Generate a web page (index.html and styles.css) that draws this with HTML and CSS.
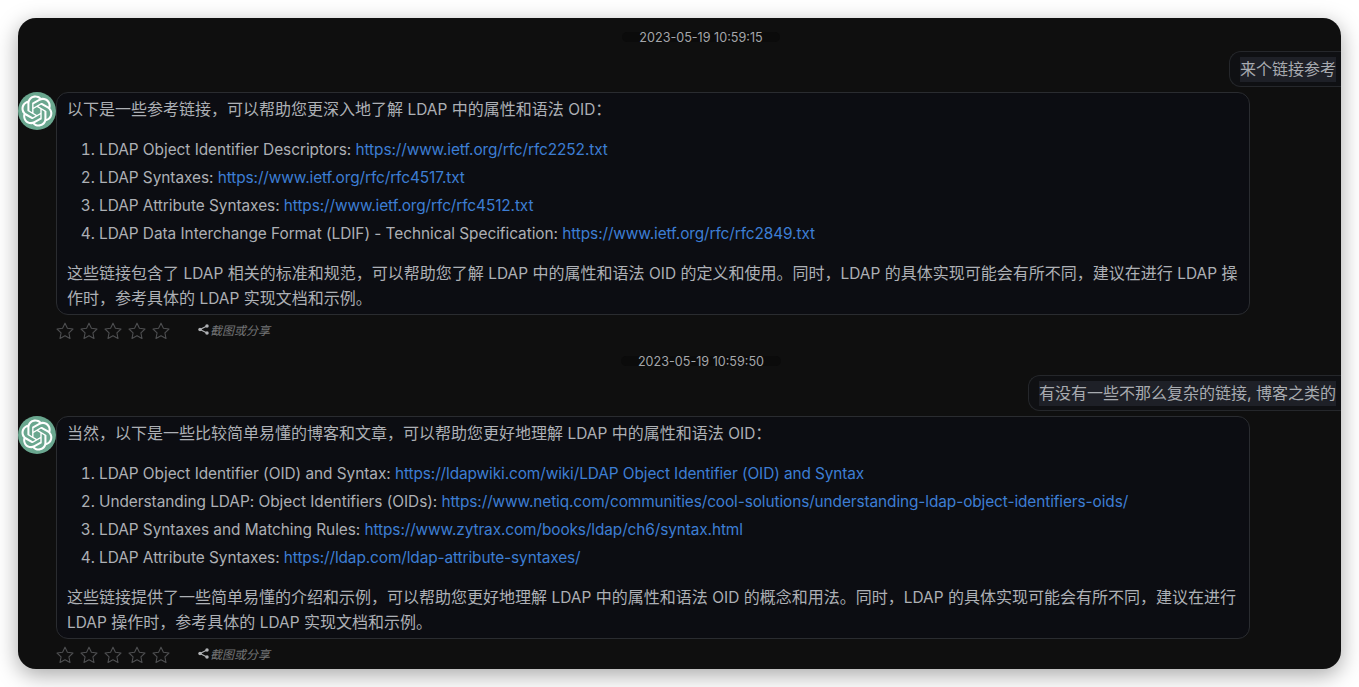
FILE: index.html
```html
<!DOCTYPE html>
<html lang="zh-CN">
  <head>
    <meta charset="UTF-8" />
    <meta name="viewport" content="width=device-width, initial-scale=1.0" />
    <title>LDAP OID</title>
    <link rel="stylesheet" href="styles.css">
  </head>
  <body>
    <svg class="defs" width="0" height="0">
      <symbol id="logo" viewBox="0 0 41 41">
        <path fill="currentColor" d="M37.5324 16.8707C37.9808 15.5241 38.1363 14.0974 37.9886 12.6859C37.8409 11.2744 37.3934 9.91076 36.676 8.68622C35.6126 6.83404 33.9882 5.3676 32.0373 4.4985C30.0864 3.62941 27.9098 3.40259 25.8215 3.85078C24.8796 2.7893 23.7219 1.94125 22.4257 1.36341C21.1295 0.785575 19.7249 0.491269 18.3058 0.500197C16.1708 0.495044 14.0893 1.16803 12.3614 2.42214C10.6335 3.67624 9.34853 5.44666 8.6917 7.47815C7.30085 7.76286 5.98686 8.3414 4.8377 9.17505C3.68854 10.0087 2.73073 11.0782 2.02839 12.312C0.956464 14.1591 0.498905 16.2988 0.721698 18.4228C0.944492 20.5467 1.83612 22.5449 3.268 24.1293C2.81966 25.4759 2.66413 26.9026 2.81182 28.3141C2.95951 29.7256 3.40701 31.0892 4.12437 32.3138C5.18791 34.1659 6.8123 35.6322 8.76321 36.5013C10.7141 37.3704 12.8907 37.5973 14.9789 37.1492C15.9208 38.2107 17.0786 39.0587 18.3747 39.6366C19.6709 40.2144 21.0755 40.5087 22.4946 40.4998C24.6307 40.5054 26.7133 39.8321 28.4418 38.5772C30.1704 37.3223 31.4556 35.5506 32.1119 33.5179C33.5027 33.2332 34.8167 32.6547 35.9659 31.821C37.115 30.9874 38.0728 29.9178 38.7752 28.684C39.8458 26.8371 40.3023 24.6979 40.0789 22.5748C39.8556 20.4517 38.9639 18.4544 37.5324 16.8707ZM22.4978 37.8849C20.7443 37.8874 19.0459 37.2733 17.6994 36.1501C17.7601 36.117 17.8666 36.0586 17.936 36.0161L25.9004 31.4156C26.1003 31.3019 26.2663 31.137 26.3813 30.9378C26.4964 30.7386 26.5563 30.5124 26.5549 30.2825V19.0542L29.9213 20.998C29.9389 21.0068 29.9541 21.0198 29.9656 21.0359C29.977 21.052 29.9842 21.0707 29.9867 21.0902V30.3889C29.9842 32.375 29.1946 34.2791 27.7909 35.6841C26.3872 37.0892 24.4838 37.8806 22.4978 37.8849ZM6.39227 31.0064C5.51397 29.4888 5.19742 27.7107 5.49804 25.9832C5.55718 26.0187 5.66048 26.0818 5.73461 26.1244L13.699 30.7248C13.8975 30.8408 14.1233 30.902 14.3532 30.902C14.583 30.902 14.8088 30.8408 15.0073 30.7248L24.731 25.1103V28.9979C24.7321 29.0177 24.7283 29.0376 24.7199 29.0556C24.7115 29.0736 24.6988 29.0893 24.6829 29.1012L16.6317 33.7497C14.9096 34.7416 12.8643 35.0097 10.9447 34.4954C9.02506 33.9811 7.38785 32.7263 6.39227 31.0064ZM4.29707 13.6194C5.17156 12.0998 6.55279 10.9364 8.19885 10.3327C8.19885 10.4013 8.19491 10.5228 8.19491 10.6071V19.808C8.19351 20.0378 8.25334 20.2638 8.36823 20.4629C8.48312 20.6619 8.64893 20.8267 8.84863 20.9404L18.5723 26.5542L15.206 28.4979C15.1894 28.5089 15.1703 28.5155 15.1505 28.5173C15.1307 28.5191 15.1107 28.516 15.0924 28.5082L7.04046 23.8557C5.32135 22.8601 4.06716 21.2235 3.55289 19.3046C3.03862 17.3858 3.30624 15.3413 4.29707 13.6194ZM31.955 20.0556L22.2312 14.4411L25.5976 12.4981C25.6142 12.4872 25.6333 12.4805 25.6531 12.4787C25.6729 12.4769 25.6928 12.4801 25.7111 12.4879L33.7631 17.1364C34.9967 17.849 36.0017 18.8982 36.6606 20.1613C37.3194 21.4244 37.6047 22.849 37.4832 24.2684C37.3617 25.6878 36.8382 27.0432 35.9743 28.1759C35.1103 29.3086 33.9415 30.1717 32.6047 30.6641C32.6047 30.5947 32.6047 30.4733 32.6047 30.3889V21.188C32.6066 20.9586 32.5474 20.7328 32.4332 20.5338C32.319 20.3348 32.154 20.1698 31.955 20.0556ZM35.3055 15.0128C35.2464 14.9765 35.1431 14.9142 35.069 14.8717L27.1045 10.2712C26.906 10.1554 26.6803 10.0943 26.4504 10.0943C26.2206 10.0943 25.9948 10.1554 25.7963 10.2712L16.0726 15.8858V11.9982C16.0715 11.9783 16.0753 11.9585 16.0837 11.9405C16.0921 11.9225 16.1048 11.9068 16.1207 11.8949L24.1719 7.25025C25.4053 6.53903 26.8158 6.19376 28.2383 6.25482C29.6608 6.31589 31.0364 6.78077 32.2044 7.59508C33.3723 8.40939 34.2842 9.53945 34.8334 10.8531C35.3826 12.1667 35.5464 13.6095 35.3055 15.0128ZM14.2424 21.9419L10.8752 19.9981C10.8576 19.9893 10.8423 19.9763 10.8309 19.9602C10.8195 19.9441 10.8122 19.9254 10.8098 19.9058V10.6071C10.8107 9.18295 11.2173 7.78848 11.9819 6.58696C12.7466 5.38544 13.8377 4.42659 15.1275 3.82264C16.4173 3.21869 17.8524 2.99464 19.2649 3.1767C20.6775 3.35876 22.0089 3.93941 23.1034 4.85067C23.0427 4.88379 22.937 4.94215 22.8668 4.98473L14.9024 9.58517C14.7025 9.69878 14.5366 9.86356 14.4215 10.0626C14.3065 10.2616 14.2466 10.4877 14.2479 10.7175L14.2424 21.9419ZM16.071 17.9991L20.4018 15.4978L24.7325 17.9975V22.9985L20.4018 25.4983L16.071 22.9985V17.9991Z"/>
      </symbol>
      <symbol id="star" viewBox="0 0 24 24">
        <path fill="none" stroke="currentColor" stroke-width="1.3" stroke-linejoin="round" d="M12 2.6l2.9 6.2 6.7.8-4.9 4.7 1.3 6.7L12 17.6 6 20.9l1.3-6.7L2.4 9.6l6.7-.8z"/>
      </symbol>
      <symbol id="share" viewBox="0 0 12 12">
        <path fill="none" stroke="currentColor" stroke-width="1.3" d="M9.8 2.2L2.2 6l7.6 3.8"/>
        <circle fill="currentColor" cx="9.8" cy="2.2" r="1.9"/>
        <circle fill="currentColor" cx="2.2" cy="6" r="1.9"/>
        <circle fill="currentColor" cx="9.8" cy="9.8" r="1.9"/>
      </symbol>
    </svg>

    <main class="window">
      <div class="time"><span>2023-05-19 10:59:15</span></div>

      <div class="user-row">
        <div class="user-bubble"><span>来个链接参考</span></div>
      </div>

      <div class="bot-row">
        <div class="avatar"><svg><use href="#logo"></use></svg></div>
        <div class="bot-bubble">
          <p>以下是一些参考链接，可以帮助您更深入地了解 <span class="en">LDAP</span> 中的属性和语法 <span class="en">OID</span>：</p>
          <ol>
            <li>LDAP Object Identifier Descriptors: <a href="#">https://www.ietf.org/rfc/rfc2252.txt</a></li>
            <li>LDAP Syntaxes: <a href="#">https://www.ietf.org/rfc/rfc4517.txt</a></li>
            <li>LDAP Attribute Syntaxes: <a href="#">https://www.ietf.org/rfc/rfc4512.txt</a></li>
            <li>LDAP Data Interchange Format (LDIF) - Technical Specification: <a href="#">https://www.ietf.org/rfc/rfc2849.txt</a></li>
          </ol>
          <p>这些链接包含了 <span class="en">LDAP</span> 相关的标准和规范，可以帮助您了解 <span class="en">LDAP</span> 中的属性和语法 <span class="en">OID</span> 的定义和使用。同时，<span class="en">LDAP</span> 的具体实现可能会有所不同，建议在进行 <span class="en">LDAP</span> 操<span>作时，参考具体的 </span><span class="en">LDAP</span> 实现文档和示例。</p>
        </div>
      </div>

      <div class="actions">
        <div class="stars">
          <svg><use href="#star"></use></svg>
          <svg><use href="#star"></use></svg>
          <svg><use href="#star"></use></svg>
          <svg><use href="#star"></use></svg>
          <svg><use href="#star"></use></svg>
        </div>
        <a class="share" href="#"><svg><use href="#share"></use></svg><em>截图或分享</em></a>
      </div>

      <div class="time time-next"><span>2023-05-19 10:59:50</span></div>

      <div class="user-row">
        <div class="user-bubble"><span>有没有一些不那么复杂的链接, 博客之类的</span></div>
      </div>

      <div class="bot-row">
        <div class="avatar"><svg><use href="#logo"></use></svg></div>
        <div class="bot-bubble">
          <p>当然，以下是一些比较简单易懂的博客和文章，可以帮助您更好地理解 <span class="en">LDAP</span> 中的属性和语法 <span class="en">OID</span>：</p>
          <ol>
            <li>LDAP Object Identifier (OID) and Syntax: <a href="#">https://ldapwiki.com/wiki/LDAP Object Identifier (OID) and Syntax</a></li>
            <li>Understanding LDAP: Object Identifiers (OIDs): <a href="#">https://www.netiq.com/communities/cool-solutions/understanding-ldap-object-identifiers-oids/</a></li>
            <li>LDAP Syntaxes and Matching Rules: <a href="#">https://www.zytrax.com/books/ldap/ch6/syntax.html</a></li>
            <li>LDAP Attribute Syntaxes: <a href="#">https://ldap.com/ldap-attribute-syntaxes/</a></li>
          </ol>
          <p>这些链接提供了一些简单易懂的介绍和示例，可以帮助您更好地理解 <span class="en">LDAP</span> 中的属性和语法 <span class="en">OID</span> 的概念和用法。同时，<span class="en">LDAP</span> 的具体实现可能会有所不同，建议在进行 <span class="en">LDAP</span> 操作时，参考具体的 <span class="en">LDAP</span> 实现文档和示例。</p>
        </div>
      </div>

      <div class="actions">
        <div class="stars">
          <svg><use href="#star"></use></svg>
          <svg><use href="#star"></use></svg>
          <svg><use href="#star"></use></svg>
          <svg><use href="#star"></use></svg>
          <svg><use href="#star"></use></svg>
        </div>
        <a class="share" href="#"><svg><use href="#share"></use></svg><em>截图或分享</em></a>
      </div>
    </main>
  </body>
</html>
```

FILE: styles.css
```css
* {
  margin: 0;
  padding: 0;
  box-sizing: border-box;
}

html,
body {
  height: 100%;
  overflow: hidden;
}

body {
  background-color: #fff;
  padding: 18px;
  font-family: Inter, "Noto Sans CJK SC", sans-serif;
  font-size: 16px;
  color: #adb0b5;
}

.defs {
  position: absolute;
}

.window {
  height: 651px;
  background-color: #0f0f0f;
  border-radius: 18px;
  overflow: hidden;
  box-shadow: 0 6px 22px rgba(0, 0, 0, 0.35);
  display: flex;
  flex-direction: column;
}

.time {
  display: flex;
  justify-content: center;
  align-items: center;
  height: 14px;
  margin-top: 12px;
  padding-left: 43px;
  font-size: 12.6px;
  color: #a4a6aa;
  flex-shrink: 0;
}

.time span {
  height: 10px;
  line-height: 11px;
  background-color: #0b0b0b;
  border-radius: 5px;
  padding: 0 17px;
}

.time-next {
  margin-top: 15px;
}

.user-row {
  display: flex;
  justify-content: flex-end;
  margin-top: 7px;
  flex-shrink: 0;
}

.user-bubble {
  height: 36px;
  padding: 5px 5px 0 10px;
  border: 1px solid #25272b;
  border-right: 0;
  border-radius: 12px 0 0 12px;
  background-color: #0f1013;
  color: #a8abb0;
}

.user-bubble span {
  display: block;
  height: 25px;
  line-height: 25px;
  background-color: #1e2027;
}

.bot-row {
  display: flex;
  margin-top: 4.5px;
  flex-shrink: 0;
}

.avatar {
  width: 38px;
  height: 38px;
  border-radius: 50%;
  background-color: #6aa78f;
  color: #fff;
  display: flex;
  justify-content: center;
  align-items: center;
  flex-shrink: 0;
}

.avatar svg {
  width: 32px;
  height: 32px;
}

.bot-bubble {
  width: 1194px;
  height: 223px;
  padding: 4px 8px 3px 10px;
  background-color: #0c0d12;
  border: 1px solid #2a2c30;
  border-radius: 12px;
  line-height: 25px;
}

.en {
  font-size: 15.4px;
}

.bot-bubble ol {
  margin: 14px 0 13px;
  padding-left: 32px;
  font-size: 15.4px;
  line-height: 28px;
  letter-spacing: -0.04px;
}

.bot-bubble a {
  color: #3d7ed4;
  text-decoration: none;
  letter-spacing: -0.1px;
}

.actions {
  display: flex;
  align-items: center;
  height: 16px;
  margin-top: 8.5px;
  padding-left: 37px;
  flex-shrink: 0;
}

.stars {
  display: flex;
  gap: 4px;
}

.stars svg {
  display: block;
  width: 20px;
  height: 20px;
  color: #4e4f51;
}

.share {
  display: flex;
  align-items: center;
  gap: 1px;
  margin-left: 27px;
  margin-top: -3px;
  font-size: 12px;
  color: #727375;
  text-decoration: none;
}

.share svg {
  width: 11px;
  height: 11px;
  color: #b0b2b5;
}

.share em {
  font-style: italic;
}
```
